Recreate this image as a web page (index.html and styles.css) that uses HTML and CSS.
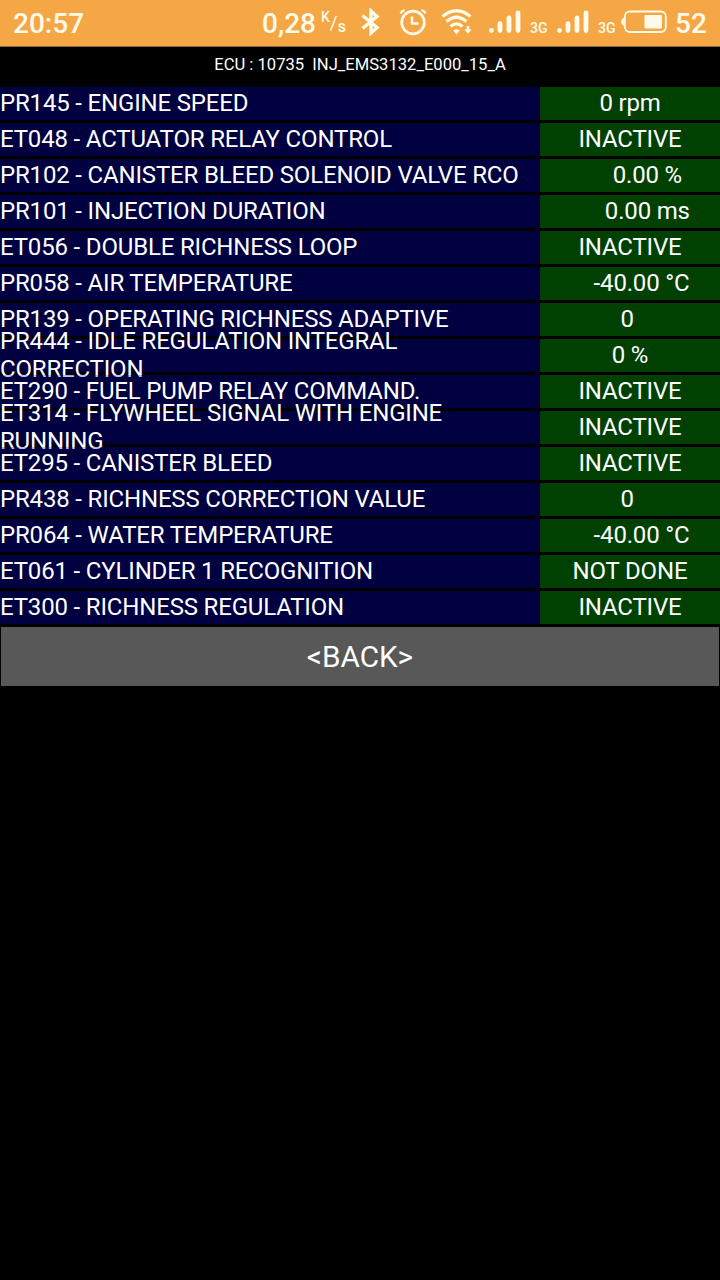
FILE: index.html
```
<!DOCTYPE html>
<html lang="en">
<head>
    <meta charset="UTF-8">
    <meta name="viewport" content="width=device-width, initial-scale=1.0">
    <title>ECU 10735</title>
    <link rel="stylesheet" href="styles.css">
</head>
<body>
    <div class="status-bar">
        <span class="clock">20:57</span>
        <span class="speed">0,28</span>
        <span class="unit"><span class="unit-top">K</span><span class="unit-slash">/</span><span class="unit-bottom">s</span></span>
        <svg class="icon bluetooth" width="22" height="28" viewBox="0 0 22 28">
            <path d="M2.5 7.5L17 19.5L11 25V3L17 8.5L2.5 20.5" fill="none" stroke="#fffbe8" stroke-width="3.4"/>
        </svg>
        <svg class="icon alarm" width="28" height="28" viewBox="0 0 28 28">
            <g fill="none" stroke="#fffbe8">
                <circle cx="14" cy="14.5" r="11.3" stroke-width="2.7"/>
                <path d="M13 8.5V15.5H19.5" stroke-width="2.5"/>
                <path d="M1.5 5.5Q2.5 3 5.5 2M26.5 5.5Q25.5 3 22.5 2" stroke-width="2.2"/>
            </g>
        </svg>
        <svg class="icon wifi" width="32" height="28" viewBox="0 0 32 28">
            <g fill="none" stroke="#fffbe8" stroke-width="3.2">
                <path d="M1.5 8.5Q15.5 -3 29.5 8.5"/>
                <path d="M5.5 13.5Q15.5 5 25.5 13.5"/>
                <path d="M9.5 18.5Q15.5 13.2 21.5 18.5"/>
            </g>
            <path d="M12.3 22.5Q15.5 19.5 18.7 22.5L15.500 26.5Z" fill="#fffbe8"/>
            <path d="M25.7 18H28.3V21.5H30.8L27 25.8L23.2 21.5H25.7Z" fill="#fffbe8"/>
        </svg>
        <svg class="icon signal" width="32" height="24" viewBox="0 0 32 24">
            <path d="M2.5 20.500V20.6M11 13.7V20.6M20 8V20.6M29 3V20.6" stroke="#fffbe8" stroke-width="4.8" stroke-linecap="round"/>
        </svg>
        <span class="network">3G</span>
        <svg class="icon signal" width="32" height="24" viewBox="0 0 32 24">
            <path d="M2.5 20.5V20.6M11 13.7V20.6M20 8V20.6M29 3V20.6" stroke="#fffbe8" stroke-width="4.8" stroke-linecap="round"/>
        </svg>
        <span class="network">3G</span>
        <svg class="icon battery" width="47" height="24" viewBox="0 0 47 24">
            <rect x="3.8" y="1.5" width="41" height="20.5" rx="5" fill="none" stroke="#fffbe8" stroke-width="1.8"/>
            <path d="M3.5 7.5Q0 9 0 11.8Q0 14.5 3.5 16Z" fill="#fffbe8"/>
            <rect x="23.5" y="5" width="17.5" height="13.5" rx="1" fill="#fffbe8"/>
        </svg>
        <span class="level">52</span>
    </div>

    <div class="title">ECU : 10735  INJ_EMS3132_E000_15_A</div>

    <div class="params">
        <div class="row"><div class="name">PR145 - ENGINE SPEED</div><div class="value">0 rpm</div></div>
        <div class="row"><div class="name">ET048 - ACTUATOR RELAY CONTROL</div><div class="value">INACTIVE</div></div>
        <div class="row"><div class="name">PR102 - CANISTER BLEED SOLENOID VALVE RCO</div><div class="value">      0.00 %</div></div>
        <div class="row"><div class="name">PR101 - INJECTION DURATION</div><div class="value">      0.00 ms</div></div>
        <div class="row"><div class="name">ET056 - DOUBLE RICHNESS LOOP</div><div class="value">INACTIVE</div></div>
        <div class="row"><div class="name">PR058 - AIR TEMPERATURE</div><div class="value">    -40.00 °C</div></div>
        <div class="row"><div class="name">PR139 - OPERATING RICHNESS ADAPTIVE</div><div class="value">0 </div></div>
        <div class="row"><div class="name">PR444 - IDLE REGULATION INTEGRAL CORRECTION</div><div class="value">0 %</div></div>
        <div class="row"><div class="name">ET290 - FUEL PUMP RELAY COMMAND.</div><div class="value">INACTIVE</div></div>
        <div class="row"><div class="name">ET314 - FLYWHEEL SIGNAL WITH ENGINE RUNNING</div><div class="value">INACTIVE</div></div>
        <div class="row"><div class="name">ET295 - CANISTER BLEED</div><div class="value">INACTIVE</div></div>
        <div class="row"><div class="name">PR438 - RICHNESS CORRECTION VALUE</div><div class="value">0 </div></div>
        <div class="row"><div class="name">PR064 - WATER TEMPERATURE</div><div class="value">    -40.00 °C</div></div>
        <div class="row"><div class="name">ET061 - CYLINDER 1 RECOGNITION</div><div class="value">NOT DONE</div></div>
        <div class="row"><div class="name">ET300 - RICHNESS REGULATION</div><div class="value">INACTIVE</div></div>
    </div>

    <button type="button" class="back">&lt;BACK&gt;</button>
</body>
</html>
```

FILE: styles.css
```
body {
    margin: 0;
    width: 720px;
    min-height: 1280px;
    background-color: #000;
    color: #fff;
    font-family: Roboto, sans-serif;
}
.status-bar {
    display: flex;
    height: 46px;
    line-height: 47px;
    border-bottom: 1px solid #8b6a45;
    background-color: #f5a746;
    color: #fffbe8;
    font-size: 28px;
    font-weight: 500;
    white-space: nowrap;
}
.icon {
    flex: none;
}
.clock {
    width: 249px;
    padding-left: 13px;
}
.speed {
    width: 59px;
}
.unit {
    display: flex;
    width: 39px;
    font-size: 16px;
}
.unit-top {
    line-height: 34px;
    font-size: 14px;
}
.unit-slash {
    line-height: 45px;
    font-size: 19px;
    font-weight: 400;
}
.unit-bottom {
    line-height: 54px;
}
.bluetooth {
    margin-top: 8px;
    margin-right: 17px;
}
.alarm {
    margin-top: 8px;
    margin-right: 14px;
}
.wifi {
    margin-top: 8px;
    margin-right: 16px;
}
.signal {
    margin-top: 10px;
    margin-right: 9px;
}
.network {
    width: 27px;
    line-height: 57px;
    font-size: 14px;
}
.battery {
    margin-top: 10px;
    margin-left: -4px;
    margin-right: 7px;
}
.title {
    height: 40px;
    line-height: 35px;
    font-size: 16.6px;
    text-align: center;
    white-space: pre;
}
.params {
    display: flex;
    flex-direction: column;
    gap: 3px;
}
.row {
    display: flex;
    height: 33px;
    font-size: 24px;
    line-height: 28px;
    letter-spacing: -0.17px;
}
.name, .value {
    display: flex;
    align-items: center;
    box-sizing: border-box;
    padding-bottom: 1px;
}
.name {
    width: 540px;
    background-color: rgba(0, 0, 255, 0.25);
}
.value {
    width: 180px;
    justify-content: center;
    background-color: rgba(0, 255, 0, 0.25);
    white-space: pre;
}
.back {
    display: block;
    width: 718px;
    height: 59px;
    margin: 3px 1px 0;
    padding: 0;
    border: none;
    background-color: #585858;
    color: #fff;
    font-family: inherit;
    font-size: 29.7px;
}
```
